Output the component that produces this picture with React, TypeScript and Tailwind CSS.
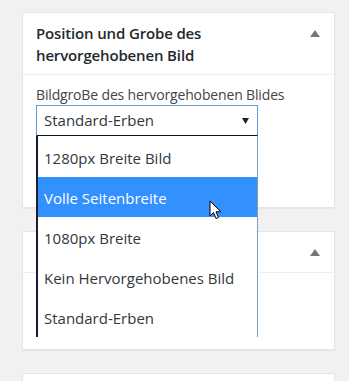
import React from "react";

const Tri = () => (
  <svg width="10" height="7" viewBox="0 0 10 7" className="block">
    <polygon points="5,0 10,7 0,7" fill="#72777c" />
  </svg>
);

const options = [
  "1280px Breite Bild",
  "Volle Seitenbreite",
  "1080px Breite",
  "Kein Hervorgehobenes Bild",
  "Standard-Erben",
];

export default function App() {
  return (
    <div
      className="w-[349px] h-[381px] overflow-hidden bg-[#f1f1f1] pt-[12px] pl-[22px] pr-[14px] flex flex-col gap-[23px]"
      style={{ fontFamily: '"Segoe UI", "Open Sans", "Noto Sans", sans-serif' }}
    >
      {/* Card 1 */}
      <div className="bg-white border border-[#e5e5e5] shadow-[0_1px_1px_rgba(0,0,0,0.04)] shrink-0">
        <div className="flex items-start justify-between border-b border-[#eeeeee] pl-[13px] pr-[14px] py-[9px] h-[62px]">
          <h2 className="text-[15px] leading-[22px] font-semibold text-[#23282d] tracking-[-0.15px]">
            Position und Grobe des
            <br />
            hervorgehobenen Bild
          </h2>
          <div className="pt-[8px]">
            <Tri />
          </div>
        </div>
        <div className="h-[132px] pl-[13px] pt-[10px]">
          <div className="text-[14px] leading-[20px] text-[#444] tracking-[-0.15px]">
            BildgroBe des hervorgehobenen Blides
          </div>
          <div className="relative w-[222px]">
            <div className="h-[31px] border border-[#5b9dd9] border-b-[#111] flex items-center justify-between pl-[7px] pr-[8px] text-[15px] text-[#32373c]">
              <span>Standard-Erben</span>
              <svg width="7" height="6" viewBox="0 0 7 6">
                <polygon points="0,0 7,0 3.5,6" fill="#222" />
              </svg>
            </div>
            <div className="absolute left-0 top-full w-[222px] h-[201px] bg-white border-l-2 border-l-[#1b1b33] border-r border-r-[#7f9db9] pt-[1px] z-10">
              {options.map((o, i) => (
                <div
                  key={o}
                  className={
                    "h-[40px] flex items-center pl-[6px] pt-[2px] text-[15px] " +
                    (i === 1 ? "bg-[#3390ff] text-white" : "text-[#32373c]")
                  }
                >
                  {o}
                </div>
              ))}
              <svg
                className="absolute left-[171px] top-[64px]"
                width="13"
                height="20"
                viewBox="0 0 13 20"
              >
                <path
                  d="M1 1 L1 16 L4.5 12.5 L7 18.5 L9.5 17.5 L7 11.8 L12 11.8 Z"
                  fill="#fff"
                  stroke="#000"
                  strokeWidth="1"
                  strokeLinejoin="round"
                />
              </svg>
            </div>
          </div>
        </div>
      </div>

      {/* Card 2 */}
      <div className="bg-white border border-[#e5e5e5] shadow-[0_1px_1px_rgba(0,0,0,0.04)] shrink-0 h-[119px]">
        <div className="h-[41px] border-b border-[#eeeeee] flex items-center justify-end pr-[14px]">
          <Tri />
        </div>
      </div>

      {/* Card 3 */}
      <div className="bg-white border border-[#e5e5e5] shrink-0 h-[40px]" />
    </div>
  );
}
